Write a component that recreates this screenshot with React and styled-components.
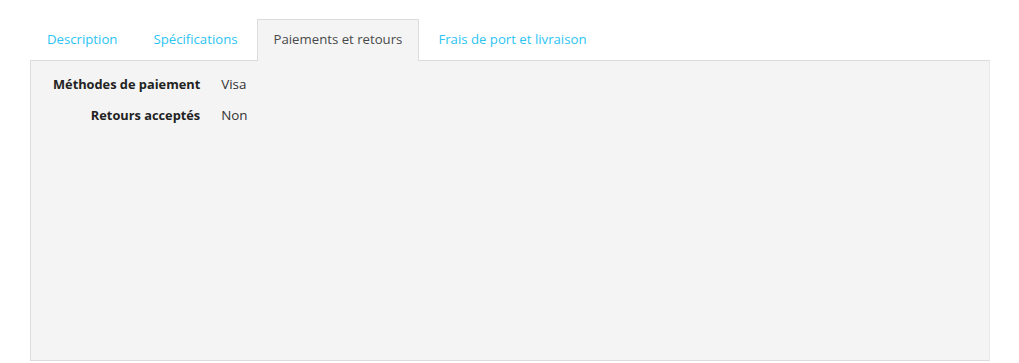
import React, { useState } from 'react'
import styled, { createGlobalStyle } from 'styled-components'

const Global = createGlobalStyle`
  body {
    margin: 0;
    background: #fff;
    font-family: 'Open Sans', 'Noto Sans', sans-serif;
  }
`

const Wrapper = styled.div`
  padding: 19px 29px 0 30px;
`

const TabList = styled.div`
  display: flex;
  gap: 2px;
  margin-bottom: -1px;
`

const Tab = styled.button`
  font-family: inherit;
  font-size: 13.2px;
  height: 42px;
  padding: 0 16px 3px;
  border: 1px solid ${p => (p.$active ? '#dcdcdc' : 'transparent')};
  border-bottom: none;
  background: ${p => (p.$active ? '#f4f4f4' : 'transparent')};
  color: ${p => (p.$active ? '#4a4a4a' : '#2bc4f5')};
  cursor: pointer;
  position: relative;
  z-index: 1;
`

const Panel = styled.div`
  box-sizing: border-box;
  background: #f4f4f4;
  border: 1px solid #dcdcdc;
  border-right-color: #e8e8e8;
  height: 301px;
  padding: 13px 0 0 22px;
`

const Table = styled.div`
  display: grid;
  grid-template-columns: max-content max-content;
  column-gap: 21px;
  row-gap: 11px;
  line-height: 20px;
  color: #333;
`

const Label = styled.div`
  font-size: 12.8px;
  font-weight: 700;
  text-align: right;
  color: #222;
`

const Value = styled.div`
  font-size: 13.4px;
  color: #333;
`

const tabs = ['Description', 'Spécifications', 'Paiements et retours', 'Frais de port et livraison']

const rows = [
  ['Méthodes de paiement', 'Visa'],
  ['Retours acceptés', 'Non'],
]

const App = () => {
  const [active, setActive] = useState(2)
  return (
    <Wrapper>
      <Global />
      <TabList>
        {tabs.map((t, i) => (
          <Tab key={t} $active={i === active} onClick={() => setActive(i)}>
            {t}
          </Tab>
        ))}
      </TabList>
      <Panel>
        <Table>
          {rows.map(([k, v]) => (
            <React.Fragment key={k}>
              <Label>{k}</Label>
              <Value>{v}</Value>
            </React.Fragment>
          ))}
        </Table>
      </Panel>
    </Wrapper>
  )
}

export default App
